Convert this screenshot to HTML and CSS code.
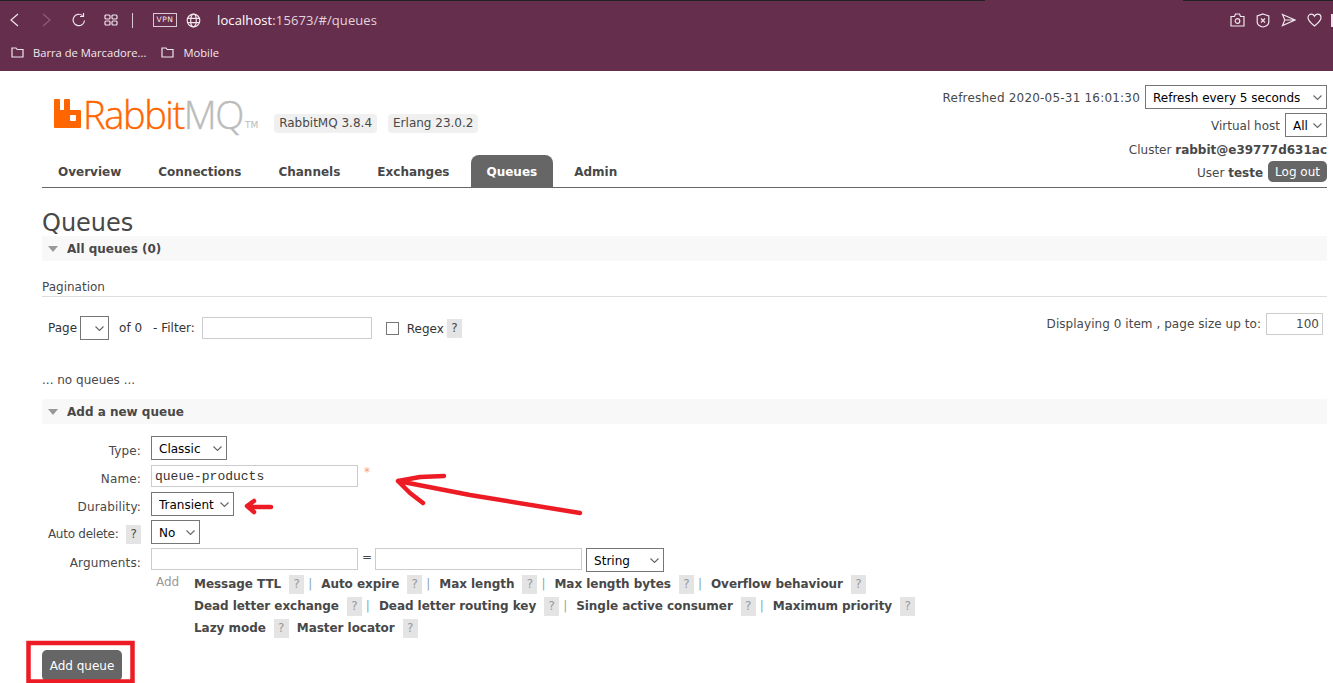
FILE: index.html
```html
<!DOCTYPE html>
<html lang="en">
  <head>
    <meta charset="UTF-8" />
    <title>RabbitMQ Management</title>
    <link rel="stylesheet" href="styles.css">
  </head>
  <body>
    <div class="browser">
      <div class="browser-edge"><span class="edge-left"></span><span class="edge-right"></span></div>
      <div class="address-row">
        <svg class="ico" width="14" height="18" viewBox="0 0 14 18"><path d="M11 3 L4 9 L11 15" /></svg>
        <svg class="ico ico-off" width="14" height="18" viewBox="0 0 14 18"><path d="M4 3 L11 9 L4 15" /></svg>
        <svg class="ico ico-reload" width="16" height="16" viewBox="0 0 16 16"><path d="M13.5 8.5 A5.7 5.7 0 1 1 11.5 3.6" /><path d="M12.5 1 V4.5 H9" /></svg>
        <svg class="ico ico-tabs" width="14" height="12" viewBox="0 0 14 12"><rect x="1" y="1" width="5" height="4" rx="1" /><rect x="8" y="1" width="5" height="4" rx="1" /><rect x="1" y="7" width="5" height="4" rx="1" /><rect x="8" y="7" width="5" height="4" rx="1" /></svg>
        <span class="bar-sep"></span>
        <span class="vpn">VPN</span>
        <svg class="ico ico-globe" width="15" height="15" viewBox="0 0 15 15"><circle cx="7.5" cy="7.5" r="6.3" /><ellipse cx="7.5" cy="7.5" rx="2.8" ry="6.3" /><path d="M1.5 5.3 H13.5 M1.5 9.7 H13.5" /></svg>
        <span class="url"><b>localhost</b>:15673/#/queues</span>
        <span class="bar-tools">
          <svg class="ico" width="15" height="14" viewBox="0 0 15 14"><path d="M1 3.5 H4.5 L5.5 1 H9.5 L10.5 3.5 H14 V13 H1 Z" /><circle cx="7.5" cy="8" r="2.3" /></svg>
          <svg class="ico" width="14" height="15" viewBox="0 0 14 15"><path d="M7 1 L12.8 3 V9 C12.8 11.5 9.5 13.4 7 14 C4.5 13.4 1.2 11.5 1.2 9 V3 Z" /><path d="M5 5.5 L9 9.5 M9 5.5 L5 9.5" /></svg>
          <svg class="ico" width="15" height="14" viewBox="0 0 15 14"><path d="M1.5 1.5 L14 7 L1.5 12.5 L3.8 7 Z M3.8 7 H14" /></svg>
          <svg class="ico" width="15" height="14" viewBox="0 0 15 14"><path d="M7.5 13 C3 9.5 1 7.5 1 4.8 C1 2.6 2.7 1.2 4.4 1.2 C5.7 1.2 6.9 2 7.5 3.2 C8.1 2 9.3 1.2 10.6 1.2 C12.3 1.2 14 2.6 14 4.8 C14 7.5 12 9.5 7.5 13 Z" /></svg>
          <span class="bar-end"></span>
        </span>
      </div>
      <div class="bookmarks">
        <span class="bookmark">
          <svg class="ico" width="13" height="11" viewBox="0 0 13 11"><path d="M1 1 H5 L6.2 2.5 H12 V10 H1 Z" /></svg>
          Barra de Marcadore...
        </span>
        <span class="bookmark">
          <svg class="ico" width="13" height="11" viewBox="0 0 13 11"><path d="M1 1 H5 L6.2 2.5 H12 V10 H1 Z" /></svg>
          Mobile
        </span>
      </div>
    </div>

    <div class="page">
      <header class="header">
        <div class="header-left">
          <div class="brand">
            <svg class="rabbit-mark" width="27" height="29" viewBox="0 0 27 29"><path fill-rule="evenodd" d="M0 1 Q0 0 1 0 H5 Q6 0 6 1 V11 H10 V1 Q10 0 11 0 H15 Q16 0 16 1 V11 H26 Q27 11 27 12 V28 Q27 29 26 29 H1 Q0 29 0 28 Z M17 16 Q16 16 16 17 V21 Q16 22 17 22 H21 Q22 22 22 21 V17 Q22 16 21 16 Z" /></svg>
            <span class="logo-text"><span class="logo-rabbit">Rabbit</span><span class="logo-mq">MQ</span></span>
            <span class="logo-tm">TM</span>
            <span class="version version-first">RabbitMQ 3.8.4</span>
            <span class="version">Erlang 23.0.2</span>
          </div>
          <nav class="tabs">
            <a class="tab">Overview</a>
            <a class="tab">Connections</a>
            <a class="tab">Channels</a>
            <a class="tab">Exchanges</a>
            <a class="tab tab-active">Queues</a>
            <a class="tab">Admin</a>
          </nav>
        </div>
        <div class="login">
          <div class="login-row">
            <span class="refreshed">Refreshed 2020-05-31 16:01:30</span>
            <select class="sel sel-refresh"><option>Refresh every 5 seconds</option></select>
          </div>
          <div class="login-row row-vhost">
            <span>Virtual host</span>
            <select class="sel sel-all"><option>All</option></select>
          </div>
          <div class="row-cluster">Cluster <b>rabbit@e39777d631ac</b></div>
          <div class="login-row row-user">
            <span>User <b>teste</b></span>
            <button class="logout">Log out</button>
          </div>
        </div>
      </header>

      <h1 class="title">Queues</h1>
      <h2 class="section-head"><span class="tri"></span>All queues (0)</h2>

      <div class="pagination-label">Pagination</div>
      <div class="pagination">
        <div class="pagination-left">
          <span>Page</span>
          <select class="sel sel-page"></select>
          <span class="of">of 0</span>
          <span class="filter">- Filter:</span>
          <input class="field field-filter" type="text" />
          <input class="check" type="checkbox" />
          <span class="regex">Regex</span>
          <span class="help help-dark">?</span>
        </div>
        <div class="pagination-right">
          <span class="displaying">Displaying 0 item , page size up to:</span>
          <input class="field field-size" type="text" value="100" />
        </div>
      </div>

      <p class="no-items">... no queues ...</p>

      <h2 class="section-head"><span class="tri"></span>Add a new queue</h2>

      <form class="queue-form">
        <div class="form-row row-type">
          <label class="form-label">Type:</label>
          <select class="sel sel-type"><option>Classic</option></select>
        </div>
        <div class="form-row row-name">
          <label class="form-label">Name:</label>
          <input class="field field-name" type="text" value="queue-products" />
          <span class="required">*</span>
        </div>
        <div class="form-row row-dur">
          <label class="form-label">Durability:</label>
          <select class="sel sel-dur"><option>Transient</option></select>
        </div>
        <div class="form-row row-auto">
          <label class="form-label">Auto delete: <span class="help help-dark">?</span></label>
          <select class="sel sel-no"><option>No</option></select>
        </div>
        <div class="form-row row-args">
          <label class="form-label">Arguments:</label>
          <input class="field field-arg" type="text" />
          <span class="equals">=</span>
          <input class="field field-arg" type="text" />
          <select class="sel sel-string"><option>String</option></select>
        </div>
        <div class="arg-help">
          <span class="add-arg">Add</span>
          <div class="arg-lines">
            <div class="arg-line">
              <b>Message TTL</b><span class="help">?</span><span class="pipe">|</span>
              <b>Auto expire</b><span class="help">?</span><span class="pipe">|</span>
              <b>Max length</b><span class="help">?</span><span class="pipe">|</span>
              <b>Max length bytes</b><span class="help">?</span><span class="pipe">|</span>
              <b>Overflow behaviour</b><span class="help">?</span>
            </div>
            <div class="arg-line">
              <b>Dead letter exchange</b><span class="help">?</span><span class="pipe">|</span>
              <b>Dead letter routing key</b><span class="help">?</span><span class="pipe">|</span>
              <b>Single active consumer</b><span class="help">?</span><span class="pipe">|</span>
              <b>Maximum priority</b><span class="help">?</span>
            </div>
            <div class="arg-line">
              <b>Lazy mode</b><span class="help">?</span>
              <b class="master">Master locator</b><span class="help">?</span>
            </div>
          </div>
        </div>
        <button class="add-queue" type="button">Add queue</button>
      </form>
    </div>

    <!-- red marks drawn on top of the screenshot -->
    <svg class="marks" width="1333" height="683" viewBox="0 0 1333 683">
      <path d="M444 476 L420 477 L398 481 L470 495 L580 513 M398 481 L410 493 L423 503" />
      <path d="M271 507 L250 507 M254 501 L247 506 L254 512" />
      <rect x="28.5" y="643" width="104" height="38.5" />
    </svg>
  </body>
</html>
```

FILE: styles.css
```css
body {
  margin: 0;
  font-family: "DejaVu Sans", Verdana, sans-serif;
  font-size: 12px;
  color: #484848;
  background: #fff;
  overflow: hidden;
}

/* browser chrome */
.browser {
  height: 71px;
  background: #652e4c;
  color: #f2eaee;
  font-family: "Open Sans", sans-serif;
}

.browser-edge {
  display: flex;
  justify-content: space-between;
  height: 1px;
}

.edge-left {
  width: 985px;
  background: #222;
}

.edge-right {
  width: 150px;
  background: #222;
}

.address-row {
  display: flex;
  align-items: center;
  height: 38px;
  padding-left: 7px;
}

.ico {
  display: block;
  flex: none;
  fill: none;
  stroke: #efe6eb;
  stroke-width: 1.2;
}

.ico-off {
  margin-left: 18px;
  stroke: #8a5f77;
}

.ico-reload {
  margin-left: 18px;
}

.ico-tabs {
  margin-left: 17px;
}

.bar-sep {
  width: 1px;
  height: 15px;
  margin-left: 14px;
  background: #d9c9d2;
}

.vpn {
  margin-left: 20px;
  width: 22px;
  height: 12px;
  border: 1px solid #d9c9d2;
  font-family: "DejaVu Sans", sans-serif;
  font-size: 7.5px;
  line-height: 12px;
  letter-spacing: 0.5px;
  text-align: center;
}

.ico-globe {
  margin-left: 9px;
}

.url {
  margin-left: 16px;
  font-size: 13px;
  letter-spacing: 0.1px;
  color: #e2d4dc;
}

.url b {
  font-weight: 400;
  color: #fff;
}

.bar-tools {
  display: flex;
  align-items: center;
  gap: 11px;
  margin-left: auto;
}

.bar-end {
  width: 2px;
  height: 13px;
  margin-left: -2px;
  background: #efe6eb;
}

.bookmarks {
  display: flex;
  align-items: center;
  gap: 15px;
  height: 26px;
  padding-left: 11px;
  font-size: 11.2px;
}

.bookmark {
  display: flex;
  align-items: center;
  gap: 9px;
}

/* page */
.page {
  padding: 0 6px 0 42px;
}

.header {
  display: flex;
  justify-content: space-between;
  height: 116px;
  border-bottom: 1px solid #666;
}

.header-left {
  display: flex;
  flex-direction: column;
  justify-content: space-between;
}

.brand {
  display: flex;
  align-items: flex-start;
  padding: 28px 0 0 12px;
}

.rabbit-mark {
  fill: #ff6600;
  flex: none;
}

.logo-text {
  margin: -7px 0 0 2px;
  font-family: "Open Sans", sans-serif;
  font-weight: 300;
  font-size: 38px;
  line-height: 44px;
  letter-spacing: -1.4px;
  -webkit-text-stroke: 0.4px;
}

.logo-rabbit {
  color: #ff6600;
}

.logo-mq {
  color: #bbb;
}

.logo-tm {
  margin: 20px 0 0 2px;
  font-size: 9px;
  line-height: 12px;
  color: #bbb;
}

.version {
  margin: 15px 0 0 11px;
  padding: 2px 5px 3px;
  background: #f0f0f0;
  border-radius: 4px;
  font-size: 12px;
  line-height: 14px;
}

.version-first {
  margin-left: 16px;
}

.tabs {
  display: flex;
}

.tab {
  padding: 0 16px;
  height: 32px;
  line-height: 34px;
  font-weight: 700;
  font-size: 12px;
  margin-right: 5px;
}

.tab-active {
  margin-left: 1px;
  padding-left: 15px;
  background: #666;
  color: #fff;
  border-radius: 8px 8px 0 0;
}

.login {
  display: flex;
  flex-direction: column;
  align-items: flex-end;
  padding-top: 14px;
}

.login-row {
  display: flex;
  align-items: center;
  gap: 5px;
  white-space: nowrap;
}

.login-row span {
  padding-top: 2px;
}

.refreshed {
  letter-spacing: 0.2px;
}

.row-vhost {
  margin-top: 4px;
}

.row-cluster {
  margin-top: 4px;
  height: 16px;
  line-height: 18px;
  white-space: nowrap;
}

.row-user {
  margin-top: 4px;
  height: 21px;
}

.logout {
  height: 21px;
  padding: 0 7px;
  border: 0;
  border-radius: 5px;
  background: #666;
  color: #fff;
  font: 12px "DejaVu Sans", sans-serif;
}

.sel {
  display: block;
  appearance: none;
  height: 24px;
  padding: 1px 0 0 7px;
  background: #fff url("data:image/svg+xml,%3Csvg xmlns='http://www.w3.org/2000/svg' width='9' height='5'%3E%3Cpath d='M.5.5l4 4 4-4' fill='none' stroke='%23666' stroke-width='1.1'/%3E%3C/svg%3E") no-repeat right 4px center;
  border: 1px solid #767676;
  border-radius: 0;
  font-family: "DejaVu Sans", sans-serif;
  font-size: 12px;
  color: #000;
}

.sel-refresh { width: 182px; }
.sel-all { width: 42px; }
.sel-page { width: 29px; margin-left: 3px; }
.sel-type { width: 76px; }
.sel-dur { width: 83px; }
.sel-no { width: 49px; }
.sel-string { width: 78px; margin-left: 4px; }

.title {
  margin: 22px 0 0;
  height: 26px;
  font-size: 24px;
  font-weight: 400;
  line-height: 27px;
}

.section-head {
  display: flex;
  align-items: center;
  margin: 0;
  height: 25px;
  background: #f8f8f8;
  font-size: 12px;
  font-weight: 700;
}

.tri {
  width: 0;
  height: 0;
  margin: 0 9px 0 6px;
  border-left: 5.5px solid transparent;
  border-right: 5.5px solid transparent;
  border-top: 6px solid #999;
}

.pagination-label {
  margin-top: 18px;
  padding-top: 1px;
  padding-bottom: 2px;
  height: 14px;
  border-bottom: 1px solid #ddd;
}

.pagination {
  display: flex;
  justify-content: space-between;
  padding-top: 16px;
  padding-right: 4px;
  height: 42px;
}

.pagination-left {
  display: flex;
  align-items: center;
  height: 30px;
  padding-left: 6px;
  color: #333;
}

.of {
  margin-left: 10px;
}

.filter {
  margin-left: 11px;
}

.field {
  box-sizing: border-box;
  height: 22px;
  border: 1px solid #ccc;
  padding: 0 3px;
  background: #fff;
}

.field-filter {
  width: 170px;
  margin-left: 7px;
}

.check {
  width: 13px;
  height: 13px;
  margin: 0 0 0 14px;
  appearance: none;
  border: 1px solid #767676;
  background: #fff;
}

.regex {
  margin-left: 8px;
  padding-top: 2px;
}

.pagination-left .help {
  margin-left: 3px;
}

.pagination-right {
  display: flex;
  gap: 5px;
  align-items: center;
  height: 22px;
}

.displaying {
  letter-spacing: 0.05px;
}

.field-size {
  width: 57px;
  text-align: right;
  font: 12px "DejaVu Sans", sans-serif;
  color: #484848;
}

.help {
  display: inline-block;
  width: 15px;
  height: 19px;
  margin-left: 8px;
  background: #e4e4e4;
  color: #999;
  line-height: 19px;
  text-align: center;
  font-size: 12px;
  font-weight: 400;
}

.help-dark {
  margin-left: 4px;
  color: #484848;
}

.no-items {
  margin: 0;
  padding-top: 18px;
  height: 26px;
  line-height: 15px;
}

.queue-form {
  padding-top: 12px;
}

.form-row {
  display: flex;
  align-items: flex-start;
}

.form-label {
  box-sizing: border-box;
  width: 99px;
  margin-right: 10px;
  padding-top: 8px;
  text-align: right;
  white-space: nowrap;
  letter-spacing: 0.15px;
}

.row-type { height: 29px; }
.row-name { height: 27px; }
.row-dur { height: 28px; }
.row-auto { height: 28px; }
.row-args { height: 27px; }

.row-name .form-label {
  padding-top: 7px;
}

.row-auto .form-label {
  padding-top: 5px;
  letter-spacing: -0.25px;
}

.field-name,
.field-arg {
  width: 207px;
}

.field-name {
  font: 13px "Liberation Mono", monospace;
  color: #333;
}

.required {
  margin-left: 6px;
  color: #f79a8c;
  line-height: 14px;
}

.equals {
  margin: 2px 3px 0 4px;
}

.arg-help {
  display: flex;
  margin-top: -2px;
  margin-left: 114px;
}

.add-arg {
  width: 38px;
  color: #999;
  padding-top: 2px;
}

.arg-line {
  display: flex;
  align-items: center;
  height: 22px;
  white-space: nowrap;
}

.arg-line b {
  letter-spacing: -0.05px;
}

.pipe {
  margin: 0 9px 0 4px;
  color: #8aa;
  font-weight: 400;
}

.master {
  margin-left: 8px;
}

.add-queue {
  display: block;
  margin-top: 11px;
  padding: 0;
  width: 80px;
  height: 31px;
  border: 0;
  border-radius: 5px;
  background: #666;
  color: #fff;
  white-space: nowrap;
  font: 12px "DejaVu Sans", sans-serif;
}

/* annotations on top of the page */
.marks {
  position: absolute;
  left: 0;
  top: 0;
  fill: none;
  stroke: #ed1c24;
  stroke-width: 4.5;
  stroke-linecap: round;
  stroke-linejoin: round;
  pointer-events: none;
}

.marks rect {
  stroke-width: 4.5;
  stroke-linejoin: miter;
}
```
